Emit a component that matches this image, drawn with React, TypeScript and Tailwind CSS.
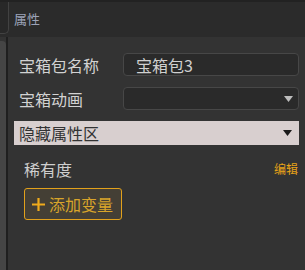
import React from 'react';

const font = { fontFamily: '"Noto Sans CJK SC", "Noto Sans", sans-serif' };

function Caret({ color }: { color: string }) {
  return (
    <svg width="9" height="6" viewBox="0 0 9 6" className="shrink-0">
      <path d="M0 0 H9 L4.5 6 Z" fill={color} />
    </svg>
  );
}

export default function App() {
  return (
    <div className="w-[305px] h-[270px] bg-[#333333] overflow-hidden flex flex-col" style={font}>
      {/* header */}
      <div className="h-[37px] bg-[#2b2b2b] border-t-2 border-[#222222] flex items-start shrink-0">
        <div className="w-[9px] h-[32px] bg-[#282828] border-r border-b border-[#424242] rounded-br-[5px]" />
        <div className="ml-[5px] mt-[8px] text-[13px] leading-[18px] text-[#9ca3b8]">属性</div>
      </div>

      {/* body */}
      <div className="flex flex-1">
        <div className="w-[6px] mt-[4px] bg-[#454545] rounded-tr-[4px]" />
        <div className="w-[2px] bg-[#1f1f1f]" />
        <div className="flex-1 flex flex-col">
          <div className="flex items-center mt-[16px] h-[23px]">
            <div className="pl-[11px] w-[115px] text-[16px] text-[#d2d2d2] leading-none">宝箱包名称</div>
            <div className="w-[176px] h-[23px] bg-[#2a2a2a] border border-[#474747] rounded-[4px] flex items-center pl-[12px] text-[16px] text-[#d0d0d0] leading-none">
              宝箱包3
            </div>
          </div>

          <div className="flex items-center mt-[11px] h-[23px]">
            <div className="pl-[11px] w-[115px] text-[16px] text-[#d2d2d2] leading-none">宝箱动画</div>
            <div className="w-[176px] h-[23px] bg-[#2a2a2a] border border-[#474747] rounded-[4px] flex items-center justify-end pr-[5px]">
              <Caret color="#bdbdbd" />
            </div>
          </div>

          <div className="ml-[6px] mt-[11px] w-[285px] h-[24px] bg-[#d8cfcf] flex items-center justify-between pl-[5px] pr-[7px]">
            <span className="text-[16px] text-[#333333] leading-none">隐藏属性区</span>
            <Caret color="#1a1a1a" />
          </div>

          <div className="flex items-center justify-between mt-[16px] pl-[16px] pr-[7px]">
            <span className="text-[16px] text-[#cfcfcf] leading-none">稀有度</span>
            <span className="text-[12px] text-[#e8a317] leading-none">编辑</span>
          </div>

          <div className="ml-[16px] mt-[11px] w-[98px] h-[32px] border border-[#e2a11c] rounded-[3px] bg-[#443f35] flex items-center pl-[7px] gap-[4px]">
            <svg width="13" height="13" viewBox="0 0 13 13">
              <path d="M6.5 0 V13 M0 6.5 H13" stroke="#f0ab1c" strokeWidth="2.2" />
            </svg>
            <span className="text-[16px] text-[#d9a52a] leading-none">添加变量</span>
          </div>
        </div>
      </div>
    </div>
  );
}
